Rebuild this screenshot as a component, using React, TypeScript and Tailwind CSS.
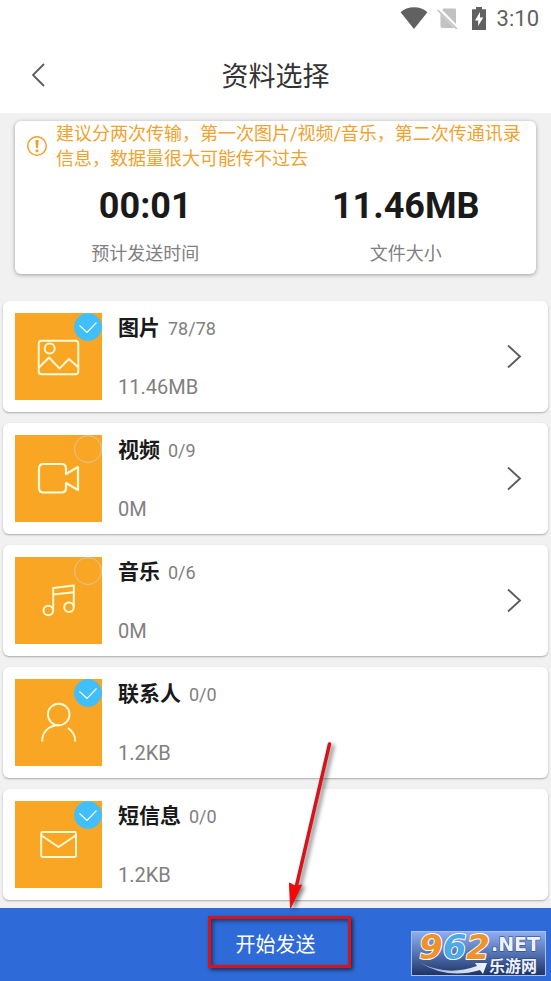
import { useState } from 'react';
import type { ReactNode } from 'react';

type Item = {
  id: string;
  name: string;
  count: string;
  size: string;
  checked: boolean;
  more: boolean;
  icon: ReactNode;
};

const items: Item[] = [
  {
    id: 'photo', name: '图片', count: '78/78', size: '11.46MB', checked: true, more: true,
    icon: (
      <>
        <rect x="23.7" y="27.7" width="39.6" height="33.6" rx="3" />
        <circle cx="34.7" cy="35.5" r="5" />
        <path d="M24 54.5 34 44.5 44.5 55.5 54 46 63.5 54.5" />
      </>
    ),
  },
  {
    id: 'video', name: '视频', count: '0/9', size: '0M', checked: false, more: true,
    icon: (
      <path strokeWidth="2.2" d="M51 39V33.5Q51 29 46.500 29H28.500Q24 29 24 33.500V53Q24 57.500 28.500 57.500H46.500Q51 57.500 51 53V48L63 55V32Z" />
    ),
  },
  {
    id: 'music', name: '音乐', count: '0/6', size: '0M', checked: false, more: true,
    icon: (
      <>
        <circle cx="33.300" cy="53.500" r="4.800" strokeWidth="2" />
        <circle cx="54" cy="50.200" r="4.800" strokeWidth="2" />
        <path d="M38.200 53.500V31L58.800 28.500V50M38.200 37.500 58.800 35.200" />
      </>
    ),
  },
  {
    id: 'contact', name: '联系人', count: '0/0', size: '1.2KB', checked: true, more: false,
    icon: (
      <>
        <circle cx="43.700" cy="35.500" r="10.800" />
        <path d="M27.200 62.500C27 53.500 33 46.500 43.700 46.300M53 49C57.500 52 60.300 56.500 60.200 62.500" />
      </>
    ),
  },
  {
    id: 'sms', name: '短信息', count: '0/0', size: '1.2KB', checked: true, more: false,
    icon: (
      <>
        <rect x="26.200" y="31" width="34.800" height="25" rx="1.500" />
        <path d="M26.500 34.500 43.500 46 60.700 34.500" />
      </>
    ),
  },
];

function StatusBar() {
  return (
    <div className="flex h-9 items-center justify-end bg-white pr-3 text-[#616161]">
      <svg className="mr-[9px] h-[22px] w-[28px]" viewBox="0 0 28 22" fill="currentColor">
        <path d="M14 22 .6 5.300Q6 .300 14 .300T27.400 5.300Z" />
      </svg>
      <svg className="mr-3 h-[22px] w-[22px]" viewBox="0 0 22 22">
        <path d="M6.500 1.500H18Q19 1.500 19 2.500V19Q19 21 17.500 21H5Q3.500 21 3.500 19V5Z" fill="#c2c2c2" />
        <path d="M2 2.500 21 22" stroke="#fff" strokeWidth="4" />
        <path d="M.700 3 20 22" stroke="#c2c2c2" strokeWidth="1.700" />
      </svg>
      <svg className="mr-[10px] h-[23px] w-[16px]" viewBox="0 0 16 23">
        <path d="M5 0H11V2.200H15V23H1V2.200H5Z" fill="currentColor" />
        <path d="M9 5 4 13.500H7.200V19L12.200 10.500H9Z" fill="#fff" />
      </svg>
      <span className="pt-0.5 text-[22px] leading-6">3:10</span>
    </div>
  );
}

function Row({ item }: { item: Item }) {
  const [checked, setChecked] = useState(item.checked);

  return (
    <li className="flex rounded-md bg-white p-3 shadow-[0_1px_2px_rgba(0,0,0,0.3)]">
      <div className="relative size-[87px] shrink-0 bg-[#faa625]">
        <svg className="size-full" viewBox="0 0 87 87" fill="none" stroke="#fffbd6" strokeWidth="1.900" strokeLinejoin="round">
          {item.icon}
        </svg>
        <input
          id={item.id}
          type="checkbox"
          checked={checked}
          onChange={(e) => setChecked(e.target.checked)}
          className="absolute top-0 right-0 size-7 appearance-none rounded-full border border-[#d6c6a8] checked:border-[#40bffb] checked:bg-[#40bffb]"
        />
        {checked && (
          <svg className="pointer-events-none absolute top-0 right-0 size-7" viewBox="0 0 28 28" fill="none" stroke="#fff" strokeWidth="1.100">
            <path d="M5.500 12.500 13 19.500 22.500 9.500" />
          </svg>
        )}
      </div>
      <div className="flex flex-1 flex-col justify-between pl-4">
        <div className="flex items-baseline gap-2">
          <label htmlFor={item.id} className="text-[21px] leading-[30px] font-bold text-[#1a1a1a]">{item.name}</label>
          <span className="text-lg leading-[30px] text-[#808080]">{item.count}</span>
        </div>
        <p className="text-xl leading-[26px] text-[#808080]">{item.size}</p>
      </div>
      {item.more && (
        <button type="button" aria-label={item.name} className="flex w-11 items-center justify-center">
          <svg className="h-6 w-4" viewBox="0 0 16 24" fill="none" stroke="#5c5c5c" strokeWidth="1.900">
            <path d="M2 .500 14 11.500 2 22.500" />
          </svg>
        </button>
      )}
    </li>
  );
}

function SiteLogo() {
  return (
    <svg className="absolute right-[5px] bottom-[5px] h-[45px] w-[135px] overflow-visible" viewBox="0 0 135 45">
      <defs>
        <linearGradient id="plate" x1="0" y1="0" x2="0" y2="1">
          <stop offset="0" stopColor="#91aff0" />
          <stop offset="0.5" stopColor="#5574b5" />
          <stop offset="1" stopColor="#1c3263" />
        </linearGradient>
        <linearGradient id="swoosh" x1="0" y1="0" x2="1" y2="0">
          <stop offset="0" stopColor="#8fa5d0" />
          <stop offset="1" stopColor="#f3f5fa" />
        </linearGradient>
      </defs>
      <rect x="0.500" y="0.500" width="134" height="44" fill="url(#plate)" stroke="#a9c1f0" />
      <path d="M8 31Q35 46 66 35L64 32 76 32 72 43 69 39Q36 49 8 31Z" fill="url(#swoosh)" />
      <text x="8" y="28" fontFamily="'DejaVu Sans', sans-serif" fontWeight="700" fontStyle="italic" fontSize="34" stroke="#fff" strokeWidth="2" paintOrder="stroke" strokeLinejoin="round">
        <tspan fill="#f0922b">9</tspan>
        <tspan fill="#4ca9ea">6</tspan>
        <tspan fill="#f0922b">2</tspan>
      </text>
      <g fill="#eef2fb" stroke="#263f75" strokeWidth="1" paintOrder="stroke" fontWeight="700">
        <text x="80" y="20" fontSize="19" fontFamily="'DejaVu Sans', sans-serif">.NET</text>
        <text x="78" y="41" fontSize="16" fontFamily="'Noto Sans CJK SC', sans-serif">乐游网</text>
      </g>
    </svg>
  );
}

export default function App() {
  return (
    <div className="flex min-h-screen flex-col bg-[#f1f1f1] font-[Roboto,'Noto_Sans_CJK_SC',sans-serif]">
      <StatusBar />
      <header className="flex h-[77px] items-center bg-white px-6">
        <button type="button" aria-label="返回" className="flex w-8 justify-center">
          <svg className="h-6 w-4" viewBox="0 0 16 24" fill="none" stroke="#5c5c5c" strokeWidth="1.800">
            <path d="M12 1 1 12 12 23" />
          </svg>
        </button>
        <h1 className="flex-1 pt-1 pr-8 text-center text-[27px] leading-10 text-[#333]">资料选择</h1>
      </header>

      <main className="flex-1 pt-2 pb-2">
        <section className="mx-[15px] rounded-md bg-white pb-2 shadow-[0_1px_4px_rgba(0,0,0,0.35)]">
          <div className="flex items-center pr-1 pl-3 text-[#f0a22e]">
            <svg className="mr-2 size-[21px] shrink-0" viewBox="0 0 21 21" fill="none" stroke="currentColor" strokeWidth="1.500">
              <circle cx="10" cy="10" r="9.300" />
              <path d="M8.300 4H11.700L11 12H9Z" fill="currentColor" stroke="none" />
              <circle cx="10" cy="14.800" r="1.600" fill="currentColor" stroke="none" />
            </svg>
            <p className="text-lg leading-[25px]">建议分两次传输，第一次图片/视频/音乐，第二次传通讯录信息，数据量很大可能传不过去</p>
          </div>
          <dl className="grid grid-cols-2 pt-3 text-center">
            <div className="flex flex-col-reverse gap-3">
              <dt className="text-lg leading-6 text-[#808080]">预计发送时间</dt>
              <dd className="text-4xl leading-[47px] font-bold text-[#1a1a1a]">00:01</dd>
            </div>
            <div className="flex flex-col-reverse gap-3">
              <dt className="text-lg leading-6 text-[#808080]">文件大小</dt>
              <dd className="text-4xl leading-[47px] font-bold text-[#1a1a1a]">11.46MB</dd>
            </div>
          </dl>
        </section>

        <ul className="mt-[27px] flex flex-col gap-[11px] px-[3px]">
          {items.map((item) => (
            <Row key={item.id} item={item} />
          ))}
        </ul>
      </main>

      <footer className="relative flex h-[73px] items-center justify-center bg-[#2e6bd8]">
        <button type="button" className="relative px-8 py-2 text-xl leading-9 text-white">
          开始发送
          <span className="pointer-events-none absolute -top-[3px] -right-[3px] bottom-[3px] left-1 border-[3px] border-[#d9131b] shadow-[2px_2px_4px_rgba(0,0,0,0.6),inset_2px_2px_4px_rgba(0,0,0,0.5)]" />
          <svg className="pointer-events-none absolute bottom-full left-1/2 mb-[3px] h-[176px] w-[72px] drop-shadow-[3px_2px_2px_rgba(0,0,0,0.5)]" viewBox="0 0 72 176">
            <path d="M53.500 4 19.500 150" stroke="#d9131b" strokeWidth="3.500" strokeLinecap="round" />
            <path d="M13.500 143 19 146 25.500 145 14.500 168Z" fill="#fa0505" stroke="#d9131b" />
          </svg>
        </button>
        <SiteLogo />
      </footer>
    </div>
  );
}
